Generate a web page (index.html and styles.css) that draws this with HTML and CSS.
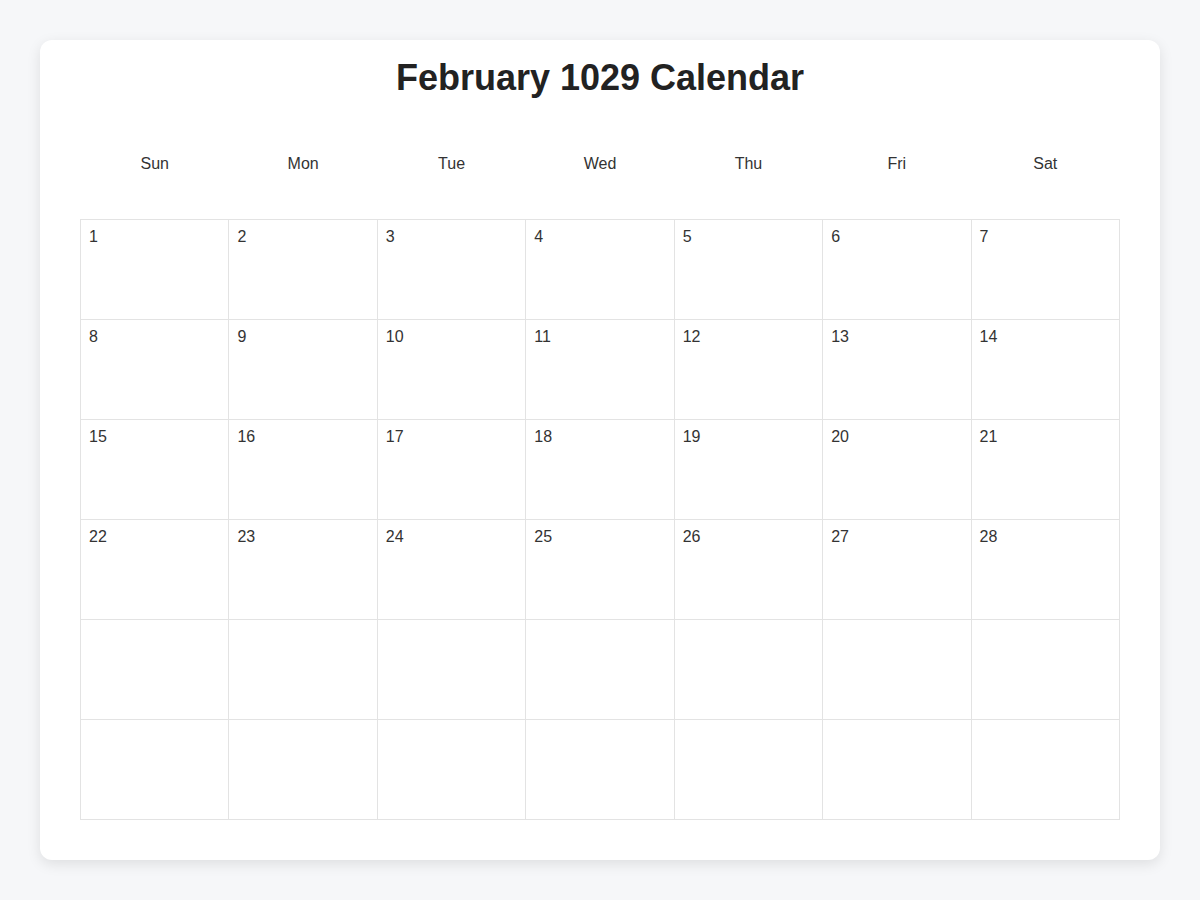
FILE: index.html
```html
<!DOCTYPE html>
<html lang="en">
<head>
<meta charset="utf-8">
<title>February 1029 Calendar</title>
<link rel="stylesheet" href="styles.css">
</head>
<body>
<main class="card">
  <h1 class="title">February 1029 Calendar</h1>
  <div class="weekdays">
    <div class="weekday">Sun</div>
    <div class="weekday">Mon</div>
    <div class="weekday">Tue</div>
    <div class="weekday">Wed</div>
    <div class="weekday">Thu</div>
    <div class="weekday">Fri</div>
    <div class="weekday">Sat</div>
  </div>
  <div class="grid">
    <div class="cell">1</div><div class="cell">2</div><div class="cell">3</div><div class="cell">4</div><div class="cell">5</div><div class="cell">6</div><div class="cell">7</div>
    <div class="cell">8</div><div class="cell">9</div><div class="cell">10</div><div class="cell">11</div><div class="cell">12</div><div class="cell">13</div><div class="cell">14</div>
    <div class="cell">15</div><div class="cell">16</div><div class="cell">17</div><div class="cell">18</div><div class="cell">19</div><div class="cell">20</div><div class="cell">21</div>
    <div class="cell">22</div><div class="cell">23</div><div class="cell">24</div><div class="cell">25</div><div class="cell">26</div><div class="cell">27</div><div class="cell">28</div>
    <div class="cell"></div><div class="cell"></div><div class="cell"></div><div class="cell"></div><div class="cell"></div><div class="cell"></div><div class="cell"></div>
    <div class="cell"></div><div class="cell"></div><div class="cell"></div><div class="cell"></div><div class="cell"></div><div class="cell"></div><div class="cell"></div>
  </div>
</main>
</body>
</html>
```
FILE: styles.css
```css
* { box-sizing: border-box; }
html, body { margin: 0; padding: 0; }
body {
  background: #f6f7f9;
  font-family: "Liberation Sans", Arial, sans-serif;
  color: #333;
  padding: 40px;
}
.card {
  background: #fff;
  border-radius: 12px;
  box-shadow: 0 4px 14px rgba(0, 0, 0, 0.1);
  padding: 18px 40px 40px;
  height: 820px;
}
.title {
  margin: 0;
  font-size: 36px;
  line-height: 40px;
  font-weight: 700;
  text-align: center;
  color: #222;
}
.weekdays {
  display: grid;
  grid-template-columns: repeat(7, 1fr);
  gap: 1px;
  padding: 57px 1px 46px;
}
.weekday {
  text-align: center;
  font-size: 16px;
  line-height: 18px;
  color: #333;
}
.grid {
  display: grid;
  grid-template-columns: repeat(7, 1fr);
  grid-auto-rows: 99px;
  gap: 1px;
  padding: 1px;
  background: #e3e3e3;
}
.cell {
  background: #fff;
  padding: 8px 8px;
  font-size: 16px;
  line-height: 18px;
  color: #333;
}
```
